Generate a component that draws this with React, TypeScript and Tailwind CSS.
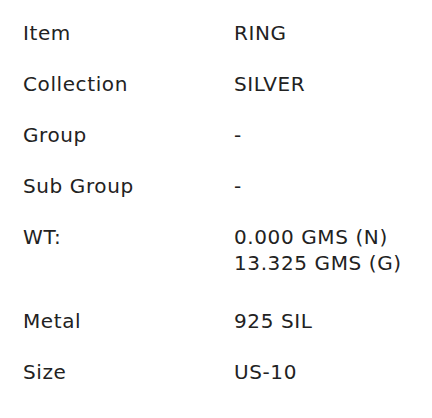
import React from "react";

const rows: { label: string; values: string[] }[] = [
  { label: "Item", values: ["RING"] },
  { label: "Collection", values: ["SILVER"] },
  { label: "Group", values: ["-"] },
  { label: "Sub Group", values: ["-"] },
  { label: "WT:", values: ["0.000 GMS (N)", "13.325 GMS (G)"] },
  { label: "Metal", values: ["925 SIL"] },
  { label: "Size", values: ["US-10"] },
];

export default function App() {
  return (
    <div
      className="w-[432px] h-[418px] bg-white text-[#222222] pt-[8px] text-[20px] tracking-[0.6px]"
      style={{ fontFamily: "'DejaVu Sans', 'Noto Sans', sans-serif" }}
    >
      {rows.map((r) => (
        <div
          key={r.label}
          className={`flex pl-[23px] ${r.values.length > 1 ? "pt-[12px] pb-[20px]" : "py-[12px]"}`}
        >
          <div className="w-[211px] leading-[27px]">{r.label}</div>
          <div className="flex flex-col leading-[26px]">
            {r.values.map((v) => (
              <div key={v}>{v}</div>
            ))}
          </div>
        </div>
      ))}
    </div>
  );
}
